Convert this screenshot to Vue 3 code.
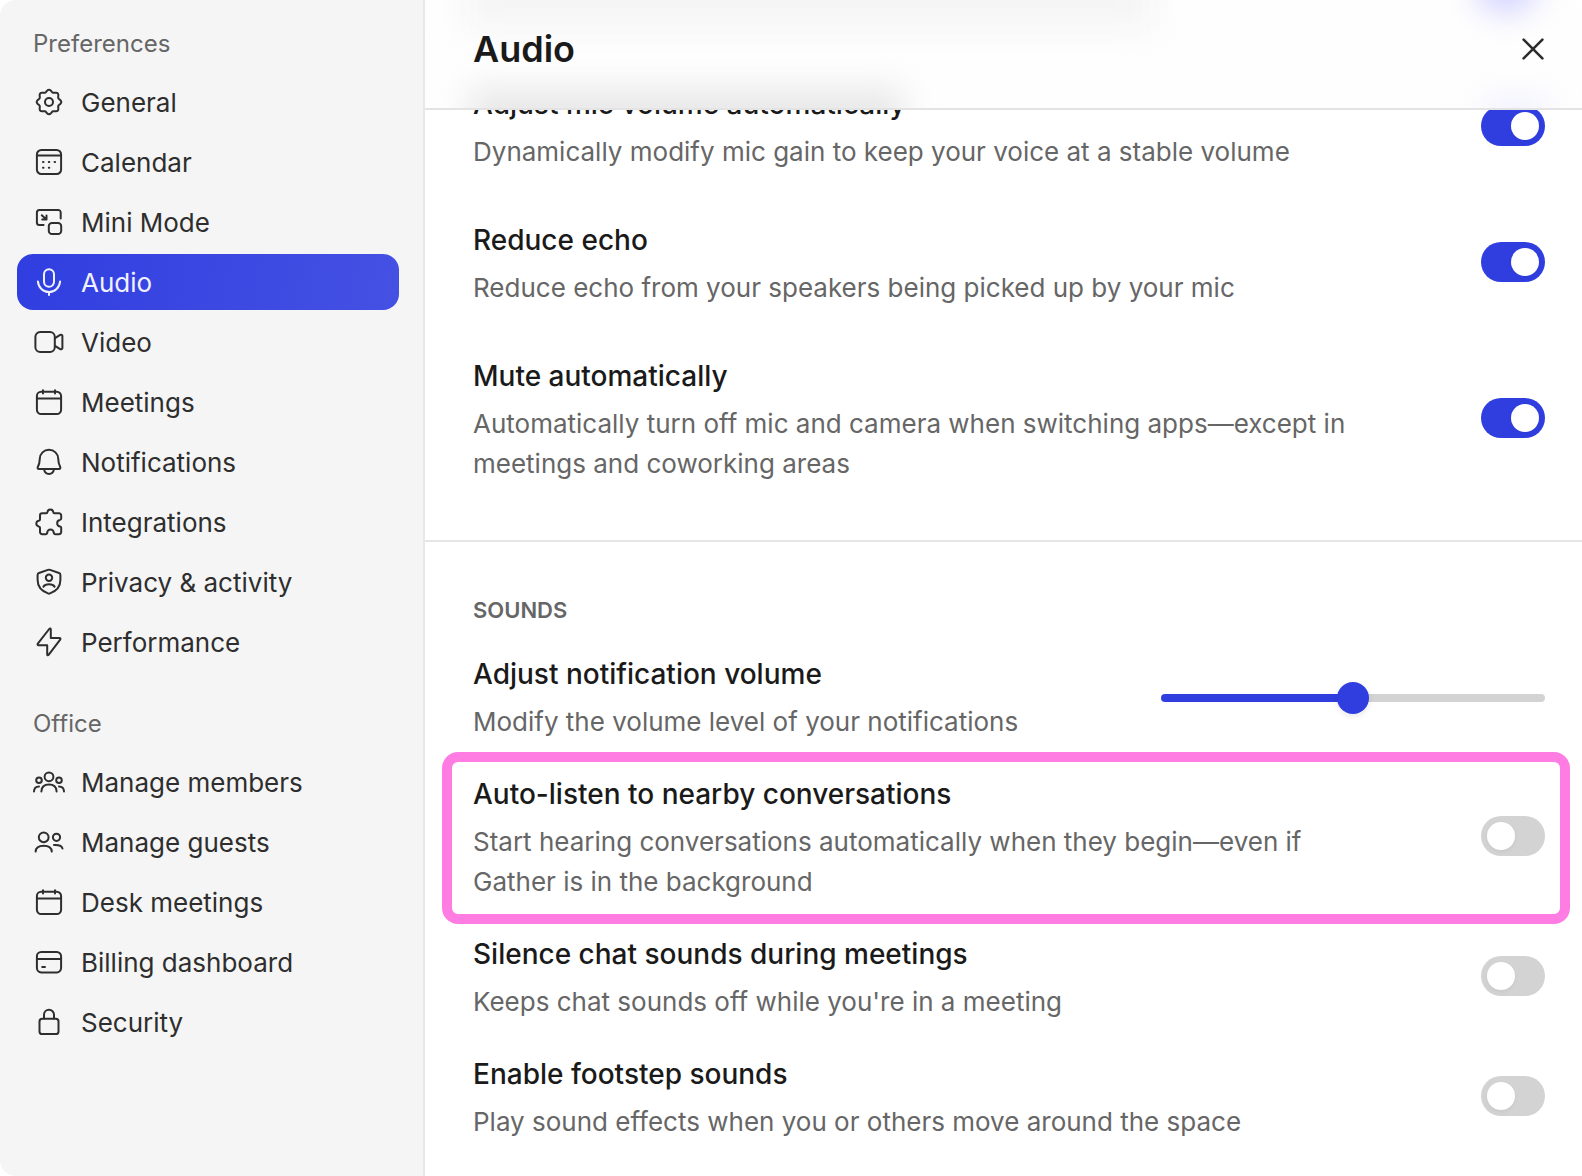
<script setup>
import { ref, reactive } from 'vue';

// Gear outline: a circle with eight soft teeth
const gearPath = () => {
  const points = [];
  for (let i = 0; i < 96; i++) {
    const a = (i / 96) * Math.PI * 2;
    const r = 11.2 + 1.1 * Math.cos(a * 8);
    points.push(`${(16 + r * Math.cos(a)).toFixed(2)} ${(16 + r * Math.sin(a)).toFixed(2)}`);
  }
  return `M${points.join('L')}z`;
};

const icons = {
  gear: [gearPath(), 'M20 16a4 4 0 1 1-8 0a4 4 0 1 1 8 0z'],
  calendar: [
    'M8.4 3.9h15.2a4.5 4.5 0 0 1 4.5 4.5v15.2a4.5 4.5 0 0 1-4.5 4.5H8.4a4.5 4.5 0 0 1-4.5-4.5V8.4a4.5 4.5 0 0 1 4.5-4.5z',
    'M4 9.6h24',
    'M10 16h.5M15.8 16h.5M21.6 16h.5M10 21.7h.5M15.8 21.7h.5'
  ],
  mini: [
    'M10.6 18.9H6.4a2.5 2.5 0 0 1-2.5-2.5V6.4a2.5 2.5 0 0 1 2.5-2.5h18.8a2.5 2.5 0 0 1 2.5 2.5v6.2',
    'M19 16.9h6a3.2 3.2 0 0 1 3.2 3.2v4.8a3.2 3.2 0 0 1-3.2 3.2h-6a3.2 3.2 0 0 1-3.2-3.2v-4.8a3.2 3.2 0 0 1 3.2-3.2z',
    'M8.8 9.2l4.6 4.3M13.5 9.4v4.2H9.2'
  ],
  mic: [
    'M16 3.2a5 5 0 0 1 5 5v7.6a5 5 0 0 1-10 0V8.2a5 5 0 0 1 5-5z',
    'M4.9 15.4c.5 6 5.2 10.7 11.1 10.7s10.6-4.7 11.1-10.7',
    'M16 26.2v2.7'
  ],
  video: [
    'M7.2 6h9.8a4.8 4.8 0 0 1 4.8 4.8v10.4a4.8 4.8 0 0 1-4.8 4.8H7.2a4.8 4.8 0 0 1-4.8-4.8V10.8A4.8 4.8 0 0 1 7.2 6z',
    'M22 12.2l5.2-3.3c1-.6 2.2 0 2.2 1.2v11.8c0 1.2-1.2 1.8-2.2 1.2L22 19.8'
  ],
  meetings: [
    'M8.2 5.7h15.6a4.3 4.3 0 0 1 4.3 4.3v13.8a4.3 4.3 0 0 1-4.3 4.3H8.2a4.3 4.3 0 0 1-4.3-4.3V10a4.3 4.3 0 0 1 4.3-4.3z',
    'M4 12.6h24M10 4.2v3.4M22 4.2v3.4'
  ],
  bell: [
    'M16 3.8c-5.2 0-9 3.9-9.2 8.8-.1 4.5-.6 5.8-2 8.4-.5 1.1 0 1.9 1.2 1.9h20c1.2 0 1.7-.8 1.2-1.9-1.4-2.6-1.9-3.9-2-8.4-.2-4.900-4-8.800-9.200-8.800z',
    'M11 23.2c.5 2.9 2.4 4.7 5 4.7s4.5-1.8 5-4.7'
  ],
  puzzle: [
    'M9.2 7.2h4c.9 0 1.2-.5 1.3-1.3a2.9 2.9 0 0 1 5.7 0c.1.8.5 1.3 1.3 1.3H26a2.2 2.2 0 0 1 2.2 2.2v3c0 .9-.5 1.3-1.3 1.5a3.3 3.3 0 0 0 0 6.5c.8.2 1.3.6 1.3 1.4V26a2.2 2.2 0 0 1-2.2 2.2h-3.7c-.9 0-1.3-.5-1.5-1.3a3.3 3.3 0 0 0-6.6 0c-.2.8-.6 1.3-1.5 1.3H9.2A2.2 2.2 0 0 1 7 26v-4.2c0-.8-.5-1.3-1.3-1.4a2.9 2.9 0 0 1 0-5.7c.8-.1 1.3-.5 1.3-1.3V9.4a2.2 2.2 0 0 1 2.2-2.2z'
  ],
  shield: [
    'M14.9 3.9L6 7c-.9.3-1.4 1-1.4 1.9V14c0 7 3.5 10.8 10.4 13.4.6.3 1.4.3 2 0C23.9 24.8 27.4 21 27.4 14V8.9c0-.9-.5-1.6-1.4-1.9l-8.9-3.1c-.7-.2-1.5-.2-2.2 0z',
    'M19.2 11.7a3.2 3.2 0 1 1-6.4 0a3.2 3.2 0 1 1 6.4 0z',
    'M10.4 20.6c1-1.6 3-2.4 5.6-2.4s4.6.8 5.6 2.4'
  ],
  bolt: [
    'M16.2 3L4.8 17.7c-.6.8-.2 1.5.8 1.5h8.6v9.2c0 1 .8 1.2 1.4.5l11.6-15.3c.6-.8.2-1.6-.8-1.6h-8.6V3.4c0-1-1-1.2-1.6-.4z'
  ],
  members: [
    'M20.4 10.8a4.4 4.4 0 1 1-8.8 0a4.4 4.4 0 1 1 8.8 0z',
    'M8.4 25.5c.2-4.5 2.3-6.9 7.6-6.9s7.4 2.4 7.6 6.9',
    'M8.8 14.3a2.8 2.8 0 1 1-5.6 0a2.8 2.8 0 1 1 5.6 0zM28.8 14.3a2.8 2.8 0 1 1-5.6 0a2.8 2.8 0 1 1 5.6 0z',
    'M1 25.5c.1-3.4 1.5-5.1 5-5.1M31 25.5c-.1-3.4-1.5-5.1-5-5.1'
  ],
  guests: [
    'M15.6 11.3a4.9 4.9 0 1 1-9.8 0a4.9 4.9 0 1 1 9.8 0z',
    'M2.6 25.6c.2-4 2.3-5.9 8.1-5.9s7.9 1.9 8.1 5.9',
    'M27.1 11.3a3.6 3.6 0 1 1-7.2 0a3.6 3.6 0 1 1 7.2 0z',
    'M21 19c5.2-.3 7.9.6 8.5 3.6'
  ],
  card: [
    'M8.2 6h15.6a4.3 4.3 0 0 1 4.3 4.3v11.8a4.3 4.3 0 0 1-4.3 4.3H8.2a4.3 4.3 0 0 1-4.3-4.3V10.3A4.3 4.3 0 0 1 8.2 6z',
    'M4 12.9h24M9.2 21h2.8'
  ],
  lock: [
    'M9.2 12.8h13.6a2.7 2.7 0 0 1 2.7 2.7v9.9a2.7 2.7 0 0 1-2.7 2.7H9.2a2.7 2.7 0 0 1-2.7-2.7v-9.9a2.7 2.7 0 0 1 2.7-2.7z',
    'M11 12.6V8.8a5 5 0 0 1 10 0v3.8'
  ]
};

const groups = [
  {
    title: 'Preferences',
    items: [
      { id: 'general', label: 'General', icon: 'gear' },
      { id: 'calendar', label: 'Calendar', icon: 'calendar' },
      { id: 'mini-mode', label: 'Mini Mode', icon: 'mini' },
      { id: 'audio', label: 'Audio', icon: 'mic' },
      { id: 'video', label: 'Video', icon: 'video' },
      { id: 'meetings', label: 'Meetings', icon: 'meetings' },
      { id: 'notifications', label: 'Notifications', icon: 'bell' },
      { id: 'integrations', label: 'Integrations', icon: 'puzzle' },
      { id: 'privacy', label: 'Privacy & activity', icon: 'shield' },
      { id: 'performance', label: 'Performance', icon: 'bolt' }
    ]
  },
  {
    title: 'Office',
    items: [
      { id: 'members', label: 'Manage members', icon: 'members' },
      { id: 'guests', label: 'Manage guests', icon: 'guests' },
      { id: 'desk-meetings', label: 'Desk meetings', icon: 'meetings' },
      { id: 'billing', label: 'Billing dashboard', icon: 'card' },
      { id: 'security', label: 'Security', icon: 'lock' }
    ]
  }
];

const current = ref('audio');
const volume = ref(50);

const micSettings = reactive([
  { id: 'mic-volume', title: 'Adjust mic volume automatically', text: 'Dynamically modify mic gain to keep your voice at a stable volume', on: true },
  { id: 'reduce-echo', title: 'Reduce echo', text: 'Reduce echo from your speakers being picked up by your mic', on: true },
  { id: 'auto-mute', title: 'Mute automatically', text: 'Automatically turn off mic and camera when switching apps—except in meetings and coworking areas', on: true }
]);

const soundSettings = reactive([
  { id: 'auto-listen', title: 'Auto-listen to nearby conversations', text: 'Start hearing conversations automatically when they begin—even if Gather is in the background', on: false, highlight: true },
  { id: 'silence-chat', title: 'Silence chat sounds during meetings', text: "Keeps chat sounds off while you're in a meeting", on: false },
  { id: 'footsteps', title: 'Enable footstep sounds', text: 'Play sound effects when you or others move around the space', on: false }
]);
</script>

<template>
  <div class="settings">
    <nav class="sidebar">
      <section v-for="group in groups" :key="group.title" class="nav-group">
        <h2 class="nav-title">{{ group.title }}</h2>
        <ul class="nav-list">
          <li v-for="item in group.items" :key="item.id">
            <a
              :href="'#' + item.id"
              :class="['nav-item', current === item.id ? 'active' : '']"
              @click="current = item.id"
            >
              <svg class="nav-icon" viewBox="0 0 32 32" aria-hidden="true">
                <path v-for="d in icons[item.icon]" :key="d" :d="d" />
              </svg>
              <span class="nav-label">{{ item.label }}</span>
            </a>
          </li>
        </ul>
      </section>
    </nav>

    <main class="panel">
      <header class="panel-header">
        <!-- Soft traces of the rows that have scrolled past -->
        <div class="traces" aria-hidden="true">
          <span class="trace desc"></span>
          <span class="trace switch"></span>
          <span class="trace title"></span>
          <span class="trace switch-low"></span>
        </div>
        <h1>Audio</h1>
        <button class="close-btn" type="button" aria-label="Close">
          <svg viewBox="0 0 24 24" aria-hidden="true"><path d="M2.6 2.6l18.8 18.8M21.4 2.600L2.600 21.400" /></svg>
        </button>
      </header>

      <!-- Microphone -->
      <section class="block mic-block">
        <div v-for="row in micSettings" :key="row.id" class="row">
          <div class="row-text">
            <label class="row-title" :for="row.id">{{ row.title }}</label>
            <p class="row-desc">{{ row.text }}</p>
          </div>
          <input :id="row.id" v-model="row.on" class="toggle" type="checkbox" role="switch" />
        </div>
      </section>

      <!-- Sounds -->
      <section class="block sound-block">
        <h2 class="block-title">SOUNDS</h2>
        <div class="row">
          <div class="row-text">
            <label class="row-title" for="volume">Adjust notification volume</label>
            <p class="row-desc">Modify the volume level of your notifications</p>
          </div>
          <input
            id="volume"
            v-model="volume"
            class="slider"
            type="range"
            min="0"
            max="100"
            :style="{ '--fill': volume + '%' }"
          />
        </div>
        <div v-for="row in soundSettings" :key="row.id" :class="['row', row.highlight ? 'highlight' : '']">
          <div class="row-text">
            <label class="row-title" :for="row.id">{{ row.title }}</label>
            <p class="row-desc">{{ row.text }}</p>
          </div>
          <input :id="row.id" v-model="row.on" class="toggle" type="checkbox" role="switch" />
        </div>
      </section>
    </main>
  </div>
</template>

<style>
body {
  background: #fff;
}
</style>

<style scoped>
.settings {
  display: flex;
  height: 100vh;
  border-radius: 16px;
  overflow: hidden;
  background: #fff;
  color: #1a1a1a;
  font-family: Inter, "Liberation Sans", sans-serif;
}

h1, h2, p, ul {
  margin: 0;
  padding: 0;
}

/* Sidebar */
.sidebar {
  flex: 0 0 425px;
  box-sizing: border-box;
  display: flex;
  flex-direction: column;
  gap: 38px;
  padding: 28px 24px 28px 17px;
  border-right: 2px solid #e8e8e8;
  background: #f5f5f5;
}

.nav-title {
  margin-bottom: 14px;
  padding-left: 16px;
  color: #666;
  font-size: 24px;
  font-weight: 400;
  line-height: 32px;
}

.nav-list {
  display: flex;
  flex-direction: column;
  gap: 4px;
  list-style: none;
}

.nav-item {
  display: flex;
  align-items: center;
  gap: 16px;
  height: 56px;
  padding: 0 16px;
  border-radius: 16px;
  color: #2e2e2e;
  font-size: 26px;
  line-height: 40px;
  text-decoration: none;
}

.nav-item.active {
  background: linear-gradient(100deg, #303ee0, #4551e3);
  color: #f0f1ff;
}

.nav-label {
  padding-top: 2px;
}

.nav-icon {
  flex: none;
  width: 32px;
  height: 32px;
  overflow: visible;
  fill: none;
  stroke: currentColor;
  stroke-width: 2;
  stroke-linecap: round;
  stroke-linejoin: round;
}

/* Panel */
.panel {
  flex: 1;
  min-width: 0;
  overflow-x: hidden;
  overflow-y: auto;
  scrollbar-width: none;
}

.panel-header {
  position: sticky;
  top: 0;
  z-index: 2;
  display: flex;
  align-items: center;
  justify-content: space-between;
  padding: 25px 37px 35px 48px;
  border-bottom: 2px solid #e3e3e3;
  background: #fefefe;
}

.traces {
  position: absolute;
  inset: 0;
  z-index: -1;
  overflow: hidden;
}

.trace {
  position: absolute;
  filter: blur(16px);
}

.trace.desc {
  top: -30px;
  left: 40px;
  width: 690px;
  height: 60px;
  background: #f5f5f5;
}

.trace.switch {
  top: -40px;
  right: 46px;
  width: 60px;
  height: 52px;
  border-radius: 26px;
  background: #d0d0ff;
}

.trace.title {
  top: 88px;
  left: 44px;
  width: 434px;
  height: 60px;
  background: #e8e8e8;
}

.trace.switch-low {
  top: 98px;
  right: 36px;
  width: 60px;
  height: 40px;
  background: #f0f0ff;
}

.panel-header h1 {
  font-size: 36px;
  font-weight: 600;
  line-height: 48px;
}

.close-btn {
  display: flex;
  padding: 0;
  border: none;
  background: none;
  color: #2e2e2e;
  cursor: pointer;
}

.close-btn svg {
  width: 24px;
  height: 24px;
  fill: none;
  stroke: currentColor;
  stroke-width: 2.6;
  stroke-linecap: round;
}

.block {
  display: flex;
  flex-direction: column;
  padding-left: 48px;
  padding-right: 37px;
}

.mic-block {
  gap: 44px;
  margin-top: -30px;
  padding-bottom: 56px;
  border-bottom: 2px solid #e6e6e6;
}

.sound-block {
  gap: 28px;
  padding-top: 52px;
  padding-bottom: 32px;
}

.block-title {
  margin-bottom: -4px;
  color: #666;
  font-size: 22px;
  font-weight: 600;
  line-height: 32px;
}

.row {
  position: relative;
  display: flex;
  align-items: center;
  gap: 108px;
}

.row-text {
  flex: 1;
  min-width: 0;
}

.row-title {
  display: block;
  margin-bottom: 4px;
  font-size: 28px;
  font-weight: 500;
  line-height: 48px;
}

.row-desc {
  color: #666;
  font-size: 26px;
  line-height: 40px;
}

/* Highlight frame */
.highlight::after {
  content: "";
  position: absolute;
  inset: -18px -25px -22px -31px;
  border: 10px solid #ff7de3;
  border-radius: 16px;
  pointer-events: none;
}

/* Controls */
.toggle {
  appearance: none;
  flex: none;
  display: flex;
  width: 64px;
  height: 40px;
  box-sizing: border-box;
  margin: 0;
  padding: 6px;
  border-radius: 20px;
  background: #d3d3d3;
  cursor: pointer;
}

.toggle::before {
  content: "";
  width: 28px;
  height: 28px;
  border-radius: 50%;
  background: #fff;
  box-shadow: 0 2px 4px rgba(0, 0, 0, 0.05);
}

.toggle:checked {
  justify-content: flex-end;
  background: #303ee0;
}

.slider {
  appearance: none;
  flex: none;
  width: 384px;
  height: 32px;
  margin: 4px 0 0;
  background: none;
  cursor: pointer;
}

.slider::-webkit-slider-runnable-track {
  height: 8px;
  border-radius: 4px;
  background: linear-gradient(to right, #303ee0 var(--fill), #d3d3d3 var(--fill));
}

.slider::-webkit-slider-thumb {
  appearance: none;
  width: 32px;
  height: 32px;
  margin-top: -12px;
  border-radius: 50%;
  background: #303ee0;
  box-shadow: 0 2px 6px rgba(0, 0, 0, 0.1);
}
</style>
